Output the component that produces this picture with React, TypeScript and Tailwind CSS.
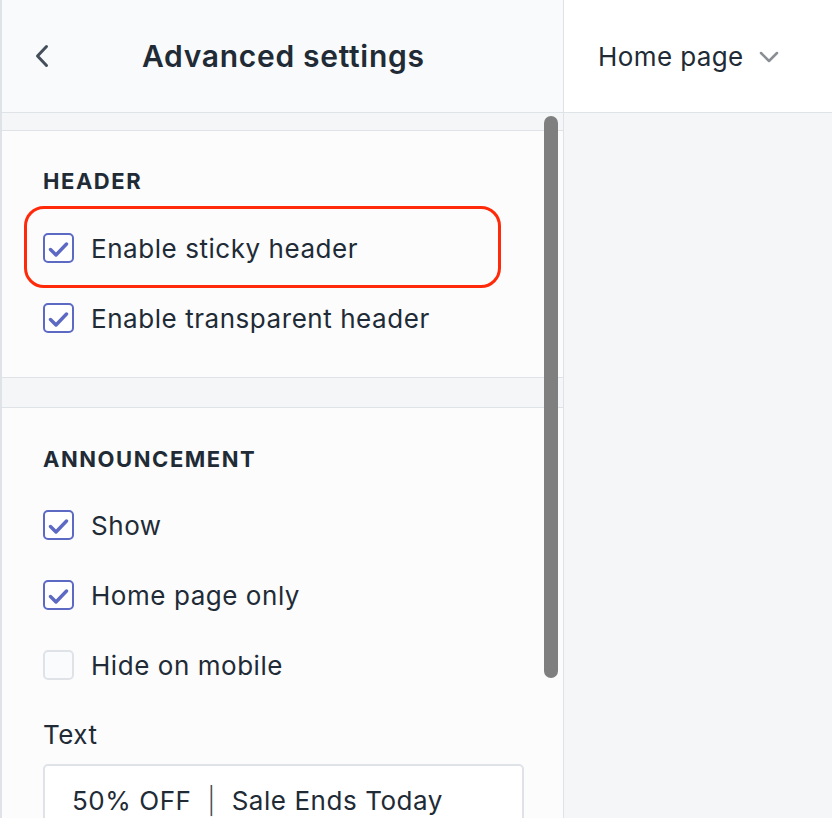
function Check({ checked }: { checked: boolean }) {
  return (
    <span
      className={
        'flex h-[30px] w-[31px] shrink-0 items-center justify-center rounded-[5px] border-2 ' +
        (checked ? 'border-[#5c6ac4] bg-white' : 'border-[#dfe3e8] bg-[#fafbfc]')
      }
    >
      {checked && (
        <svg width="21" height="16" viewBox="0 0 21 16" fill="none" className="mt-[2px]">
          <path d="M2.5 8.5l5.5 5.5 10.5-11" stroke="#5c6ac4" strokeWidth="3.4" strokeLinecap="round" strokeLinejoin="round" />
        </svg>
      )}
    </span>
  );
}

function Row({ label, checked, highlight }: { label: string; checked: boolean; highlight?: boolean }) {
  return (
    <div className="relative flex h-[70px] items-center gap-[17px]">
      {highlight && (
        <div className="absolute -left-[19px] top-[-7px] h-[82px] w-[477px] rounded-[20px] border-[3px] border-[#ff2a0a]" />
      )}
      <Check checked={checked} />
      <span className="text-[26px] tracking-[0.55px] text-[#212b36]">{label}</span>
    </div>
  );
}

export default function App() {
  return (
    <div className="flex h-[818px] w-[832px] overflow-hidden bg-white font-['Inter','Noto_Sans',sans-serif] text-[#212b36]">
      <div className="flex w-[564px] shrink-0 flex-col border-l-2 border-r border-[#dfe3e8]">
        <div className="flex h-[113px] shrink-0 items-center border-b border-[#dfe3e8] bg-[#f9fafb]">
          <svg width="16" height="24" viewBox="0 0 16 24" fill="none" className="ml-[32px]">
            <path d="M12.5 2.5L3.5 12l9 9.5" stroke="#454f5b" strokeWidth="3" strokeLinecap="round" strokeLinejoin="round" />
          </svg>
          <h1 className="ml-[92px] text-[30px] font-semibold tracking-[0.7px]">Advanced settings</h1>
        </div>
        <div className="relative flex-1 overflow-hidden bg-[#fcfcfd]">
          <div className="h-[18px] border-b border-[#dfe3e8] bg-[#f4f6f8]" />
          <div className="px-[41px] pb-[24px] pt-[36px]">
            <h2 className="text-[22px] font-bold leading-[28px] tracking-[1.55px]">HEADER</h2>
            <div className="mt-[18px]">
              <Row label="Enable sticky header" checked highlight />
              <Row label="Enable transparent header" checked />
            </div>
          </div>
          <div className="h-[31px] border-y border-[#dfe3e8] bg-[#f4f6f8]" />
          <div className="px-[41px] pt-[37px]">
            <h2 className="text-[22px] font-bold leading-[28px] tracking-[1.55px]">ANNOUNCEMENT</h2>
            <div className="mt-[17px]">
              <Row label="Show" checked />
              <Row label="Home page only" checked />
              <Row label="Hide on mobile" checked={false} />
            </div>
            <div className="mt-[21px] text-[26px] leading-[28px] tracking-[0.5px]">Text</div>
            <div className="mt-[15px] mr-[-2px] flex h-[72px] items-center rounded-[5px] border-2 border-[#dfe3e8] bg-white px-[27px] text-[26px] tracking-[0.55px] whitespace-pre">
              50% OFF  <span className="font-light text-[#454f5b]">|</span>  Sale Ends Today
            </div>
          </div>
          <div className="absolute left-[542px] top-[3px] h-[562px] w-[14px] rounded-full bg-[#7f7f80]" />
        </div>
      </div>
      <div className="flex flex-1 flex-col">
        <div className="flex h-[113px] shrink-0 items-center border-b border-[#dfe3e8] bg-white pl-[34px]">
          <span className="text-[26px] tracking-[0.4px]">Home page</span>
          <svg width="20" height="12" viewBox="0 0 20 12" fill="none" className="ml-[15px] mt-[2px]">
            <path d="M2 2l8 8 8-8" stroke="#8a8f95" strokeWidth="2.5" strokeLinecap="round" strokeLinejoin="round" />
          </svg>
        </div>
        <div className="flex-1 bg-[#f4f6f8]" />
      </div>
    </div>
  );
}
